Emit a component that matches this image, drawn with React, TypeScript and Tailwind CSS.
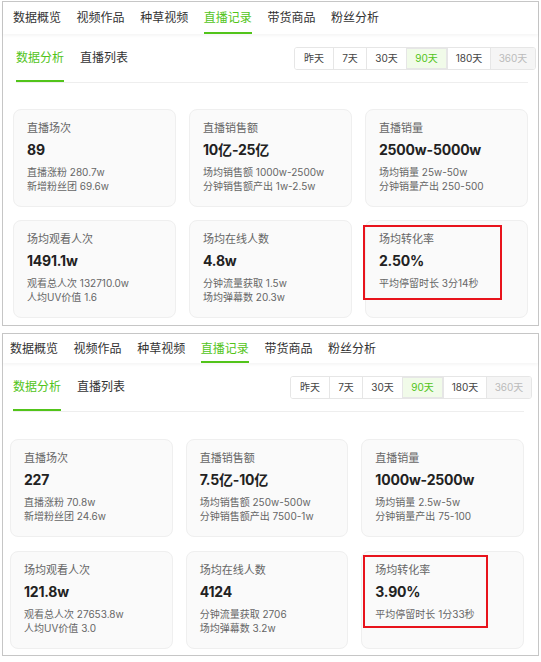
type Card = { label: string; value: string; lines: string[] }

type PanelProps = {
  navH: string
  padX: string
  gridPt: string
  gridGap: string
  pb: string
  cards: Card[]
  mark: string
}

const tabs = ['数据概览', '视频作品', '种草视频', '直播记录', '带货商品', '粉丝分析']

const ranges = [
  { t: '昨天', w: 'w-[38px]' },
  { t: '7天', w: 'w-[33px]' },
  { t: '30天', w: 'w-[40px]' },
  { t: '90天', w: 'w-[41px]', active: true },
  { t: '180天', w: 'w-[43px]' },
  { t: '360天', w: 'w-[45px]', disabled: true },
]

const first: Card[] = [
  { label: '直播场次', value: '89', lines: ['直播涨粉 280.7w', '新增粉丝团 69.6w'] },
  { label: '直播销售额', value: '10亿-25亿', lines: ['场均销售额 1000w-2500w', '分钟销售额产出 1w-2.5w'] },
  { label: '直播销量', value: '2500w-5000w', lines: ['场均销量 25w-50w', '分钟销量产出 250-500'] },
  { label: '场均观看人次', value: '1491.1w', lines: ['观看总人次 132710.0w', '人均UV价值 1.6'] },
  { label: '场均在线人数', value: '4.8w', lines: ['分钟流量获取 1.5w', '场均弹幕数 20.3w'] },
  { label: '场均转化率', value: '2.50%', lines: ['平均停留时长 3分14秒'] },
]

const second: Card[] = [
  { label: '直播场次', value: '227', lines: ['直播涨粉 70.8w', '新增粉丝团 24.6w'] },
  { label: '直播销售额', value: '7.5亿-10亿', lines: ['场均销售额 250w-500w', '分钟销售额产出 7500-1w'] },
  { label: '直播销量', value: '1000w-2500w', lines: ['场均销量 2.5w-5w', '分钟销量产出 75-100'] },
  { label: '场均观看人次', value: '121.8w', lines: ['观看总人次 27653.8w', '人均UV价值 3.0'] },
  { label: '场均在线人数', value: '4124', lines: ['分钟流量获取 2706', '场均弹幕数 3.2w'] },
  { label: '场均转化率', value: '3.90%', lines: ['平均停留时长 1分33秒'] },
]

function StatCard({ card, mark }: { card: Card; mark?: string }) {
  return (
    <div className="relative h-[98px] rounded-[8px] border border-[#efefef] bg-[#fafafa] px-[13px] pt-[11px]">
      <div className="text-[11px] leading-[14px] text-[#666]">{card.label}</div>
      <div className="mt-[5px] text-[14px] font-bold leading-[20px] tracking-[-0.2px] text-[#222]">{card.value}</div>
      <div className="mt-[5px]">
        {card.lines.map((l) => (
          <div key={l} className="text-[10px] leading-[14px] text-[#666]">
            {l}
          </div>
        ))}
      </div>
      {mark && <div className={`pointer-events-none absolute border-2 border-[#e8131c] ${mark}`} />}
    </div>
  )
}

function Panel({ navH, padX, gridPt, gridGap, pb, cards, mark }: PanelProps) {
  return (
    <section className="ml-[2px] w-[537px] border border-[#c6c6c6] bg-white">
      <nav className={`relative z-10 flex gap-[15.6px] shadow-[0_2px_3px_rgba(0,0,0,0.04)] ${navH} ${padX}`}>
        {tabs.map((t, i) => (
          <div
            key={t}
            className={`relative flex items-center text-[12px] ${i === 3 ? 'text-[#52c41a]' : 'text-[#333]'}`}
          >
            {t}
            {i === 3 && <span className="absolute bottom-0 left-0 h-[2px] w-full bg-[#52c41a]" />}
          </div>
        ))}
      </nav>
      <div className={`flex h-[49px] items-stretch ${padX}`}>
        <div className="ml-[3px] flex flex-1 gap-[16px] border-b border-[#eeeeee]">
          <div className="relative flex items-center text-[12px] text-[#52c41a]">
            数据分析
            <span className="absolute bottom-0 left-0 h-[2px] w-full bg-[#52c41a]" />
          </div>
          <div className="flex items-center text-[12px] text-[#333]">直播列表</div>
          <div className="ml-auto mr-[-8px] flex items-center">
            <div className="flex h-[23px] overflow-hidden rounded-[3px] border border-[#e6e6e6]">
              {ranges.map((r, i) => (
                <div
                  key={r.t}
                  className={`flex items-center justify-center text-[10px] ${r.w} ${i > 0 ? 'border-l border-[#e6e6e6]' : ''} ${
                    r.active
                      ? 'border border-[#95de64] bg-[#f1fbe9] text-[#52c41a]'
                      : r.disabled
                        ? 'bg-[#f5f5f5] text-[#bbbbbb]'
                        : 'bg-white text-[#444]'
                  }`}
                >
                  {r.t}
                </div>
              ))}
            </div>
          </div>
        </div>
      </div>
      <div className={`grid grid-cols-3 gap-x-[13px] ${gridGap} ${gridPt} ${pb} ${padX}`}>
        {cards.map((c, i) => (
          <StatCard key={c.label} card={c} mark={i === 5 ? mark : undefined} />
        ))}
      </div>
    </section>
  )
}

export default function App() {
  return (
    <main
      className="h-[662px] w-[541px] bg-white"
      style={{ fontFamily: 'Inter, "Noto Sans CJK SC", sans-serif' }}
    >
      <div className="h-[1px]" />
      <Panel
        navH="h-[32px]"
        padX="pl-[10px] pr-[10px]"
        gridPt="pt-[26px]"
        gridGap="gap-y-[13px]"
        pb="pb-[7px]"
        cards={first}
        mark="left-[-3px] top-[4px] h-[75px] w-[139px]"
      />
      <div className="h-[7px]" />
      <Panel
        navH="h-[29px]"
        padX="pl-[7px] pr-[14px]"
        gridPt="pt-[27px]"
        gridGap="gap-y-[14px]"
        pb="pb-[6px]"
        cards={second}
        mark="left-[1px] top-[3px] h-[73px] w-[125px]"
      />
    </main>
  )
}
